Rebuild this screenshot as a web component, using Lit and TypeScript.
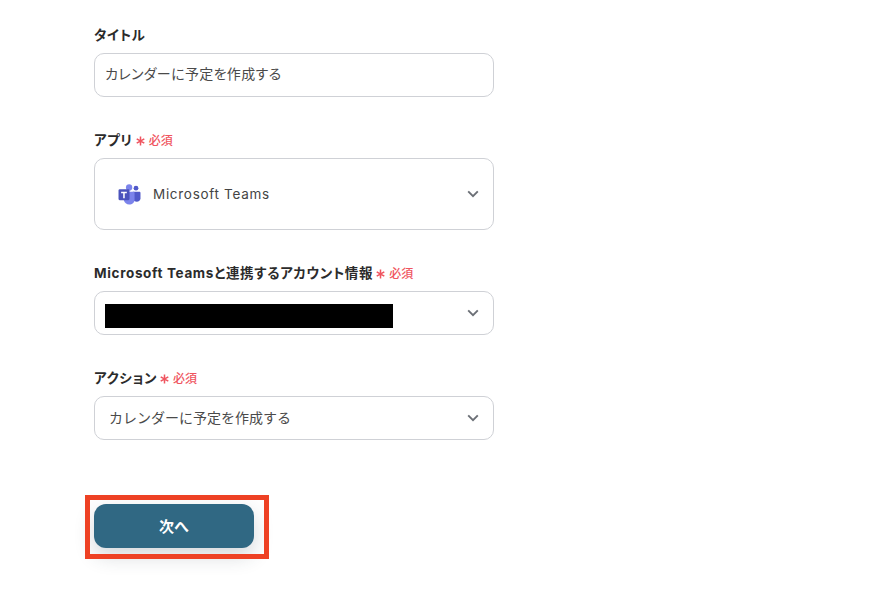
import { LitElement, html, css } from "lit";
import { customElement } from "lit/decorators.js";

const chevron = html`<svg class="chev" width="12" height="8" viewBox="0 0 12 8"><path d="M1.2 1.4 6 6.2l4.8-4.8" fill="none" stroke="#6b6f76" stroke-width="1.9"/></svg>`;

const star = html`<svg class="star" width="9" height="10" viewBox="0 0 9 10"><path d="M4.5.6v8.8M.7 2.8l7.6 4.4M8.3 2.8.7 7.2" fill="none" stroke="#ef5560" stroke-width="1.5"/></svg>`;

const teams = html`<svg width="23" height="21" viewBox="0 0 24 22">
  <circle cx="18.8" cy="4.4" r="2.5" fill="#5059c9"/>
  <path d="M15.5 8h6.8c.7 0 1.2.5 1.2 1.2v5.6c0 2.2-1.8 3.7-3.9 3.7-2 0-3.3-1-4.1-2.3z" fill="#5059c9"/>
  <circle cx="11.6" cy="3.6" r="3.3" fill="#7b83eb"/>
  <path d="M6.6 8h9.5c.7 0 1.2.6 1.2 1.2v7.2c0 3-2.5 5.1-5.6 5.1-2.8 0-5-1.6-5.6-4.4z" fill="#7b83eb"/>
  <rect x="0.5" y="5.5" width="11.5" height="11.5" rx="1.2" fill="#4b53bc"/>
  <path d="M3.2 8.2h6v1.4H7v5.2H5.4V9.6H3.2z" fill="#fff"/>
</svg>`;

@customElement("app-root")
export class AppRoot extends LitElement {
  static styles = css`
    :host {
      display: block;
      width: 872px;
      height: 592px;
      background: #fff;
      overflow: hidden;
      font-family: Inter, "Noto Sans CJK JP", sans-serif;
      color: #2b2b2b;
    }
    .form {
      display: flex;
      flex-direction: column;
      width: 400px;
      padding: 26px 0 0 94px;
    }
    .label {
      display: flex;
      align-items: center;
      gap: 3px;
      height: 18px;
      font-size: 13.5px;
      font-weight: 700;
      line-height: 18px;
      letter-spacing: 0.65px;
      font-feature-settings: "palt";
      margin-bottom: 9px;
    }
    .req {
      display: flex;
      align-items: center;
      gap: 4px;
      color: #ef5560;
      font-size: 12px;
      font-weight: 500;
      letter-spacing: 0;
      font-feature-settings: normal;
      padding-top: 1px;
    }
    .star { flex: none; }
    .field {
      box-sizing: border-box;
      display: flex;
      align-items: center;
      justify-content: space-between;
      height: 44px;
      border: 1px solid #cfd1d6;
      border-radius: 10px;
      padding: 0 14px 0 10px;
      font-size: 14px;
      font-feature-settings: "palt";
      color: #4a4a4a;
      letter-spacing: 0.35px;
      margin-bottom: 34px;
    }
    .field > .txt { padding-bottom: 5px; }
    .field.tall {
      height: 72px;
      padding-left: 23px;
    }
    .field.action {
      padding-left: 14px;
      margin-bottom: 64px;
      font-feature-settings: normal;
      letter-spacing: 0;
    }
    .field.action > .txt { padding-bottom: 3px; }
    .app {
      display: flex;
      align-items: center;
      gap: 12px;
      font-size: 13.5px;
      letter-spacing: 0.7px;
      color: #444;
    }
    .mask {
      width: 288px;
      height: 24px;
      background: #000;
      margin-top: 6px;
    }
    .btnwrap {
      position: relative;
      width: 160px;
      height: 44px;
    }
    .btn {
      display: block;
      width: 160px;
      height: 44px;
      border: none;
      padding: 0 0 2px;
      border-radius: 12px;
      background: #306883;
      color: #fff;
      font: 700 15px Inter, "Noto Sans CJK JP", sans-serif;
      box-shadow: 0 8px 20px rgba(40, 60, 75, 0.2);
    }
    .mark {
      position: absolute;
      left: -9px;
      top: -9px;
      width: 184px;
      height: 64px;
      box-sizing: border-box;
      border: 5px solid #ee4124;
      pointer-events: none;
    }
    .chev { flex: none; }
  `;

  private req() {
    return html`<span class="req">${star}<span>必須</span></span>`;
  }

  render() {
    return html`
      <div class="form">
        <div class="label">タイトル</div>
        <div class="field"><span class="txt">カレンダーに予定を作成する</span></div>

        <div class="label">アプリ ${this.req()}</div>
        <div class="field tall">
          <span class="app">${teams}<span>Microsoft Teams</span></span>
          ${chevron}
        </div>

        <div class="label">Microsoft Teamsと連携するアカウント情報 ${this.req()}</div>
        <div class="field"><span class="mask"></span>${chevron}</div>

        <div class="label">アクション ${this.req()}</div>
        <div class="field action"><span class="txt">カレンダーに予定を作成する</span>${chevron}</div>

        <div class="btnwrap">
          <button class="btn">次へ</button>
          <span class="mark"></span>
        </div>
      </div>
    `;
  }
}
